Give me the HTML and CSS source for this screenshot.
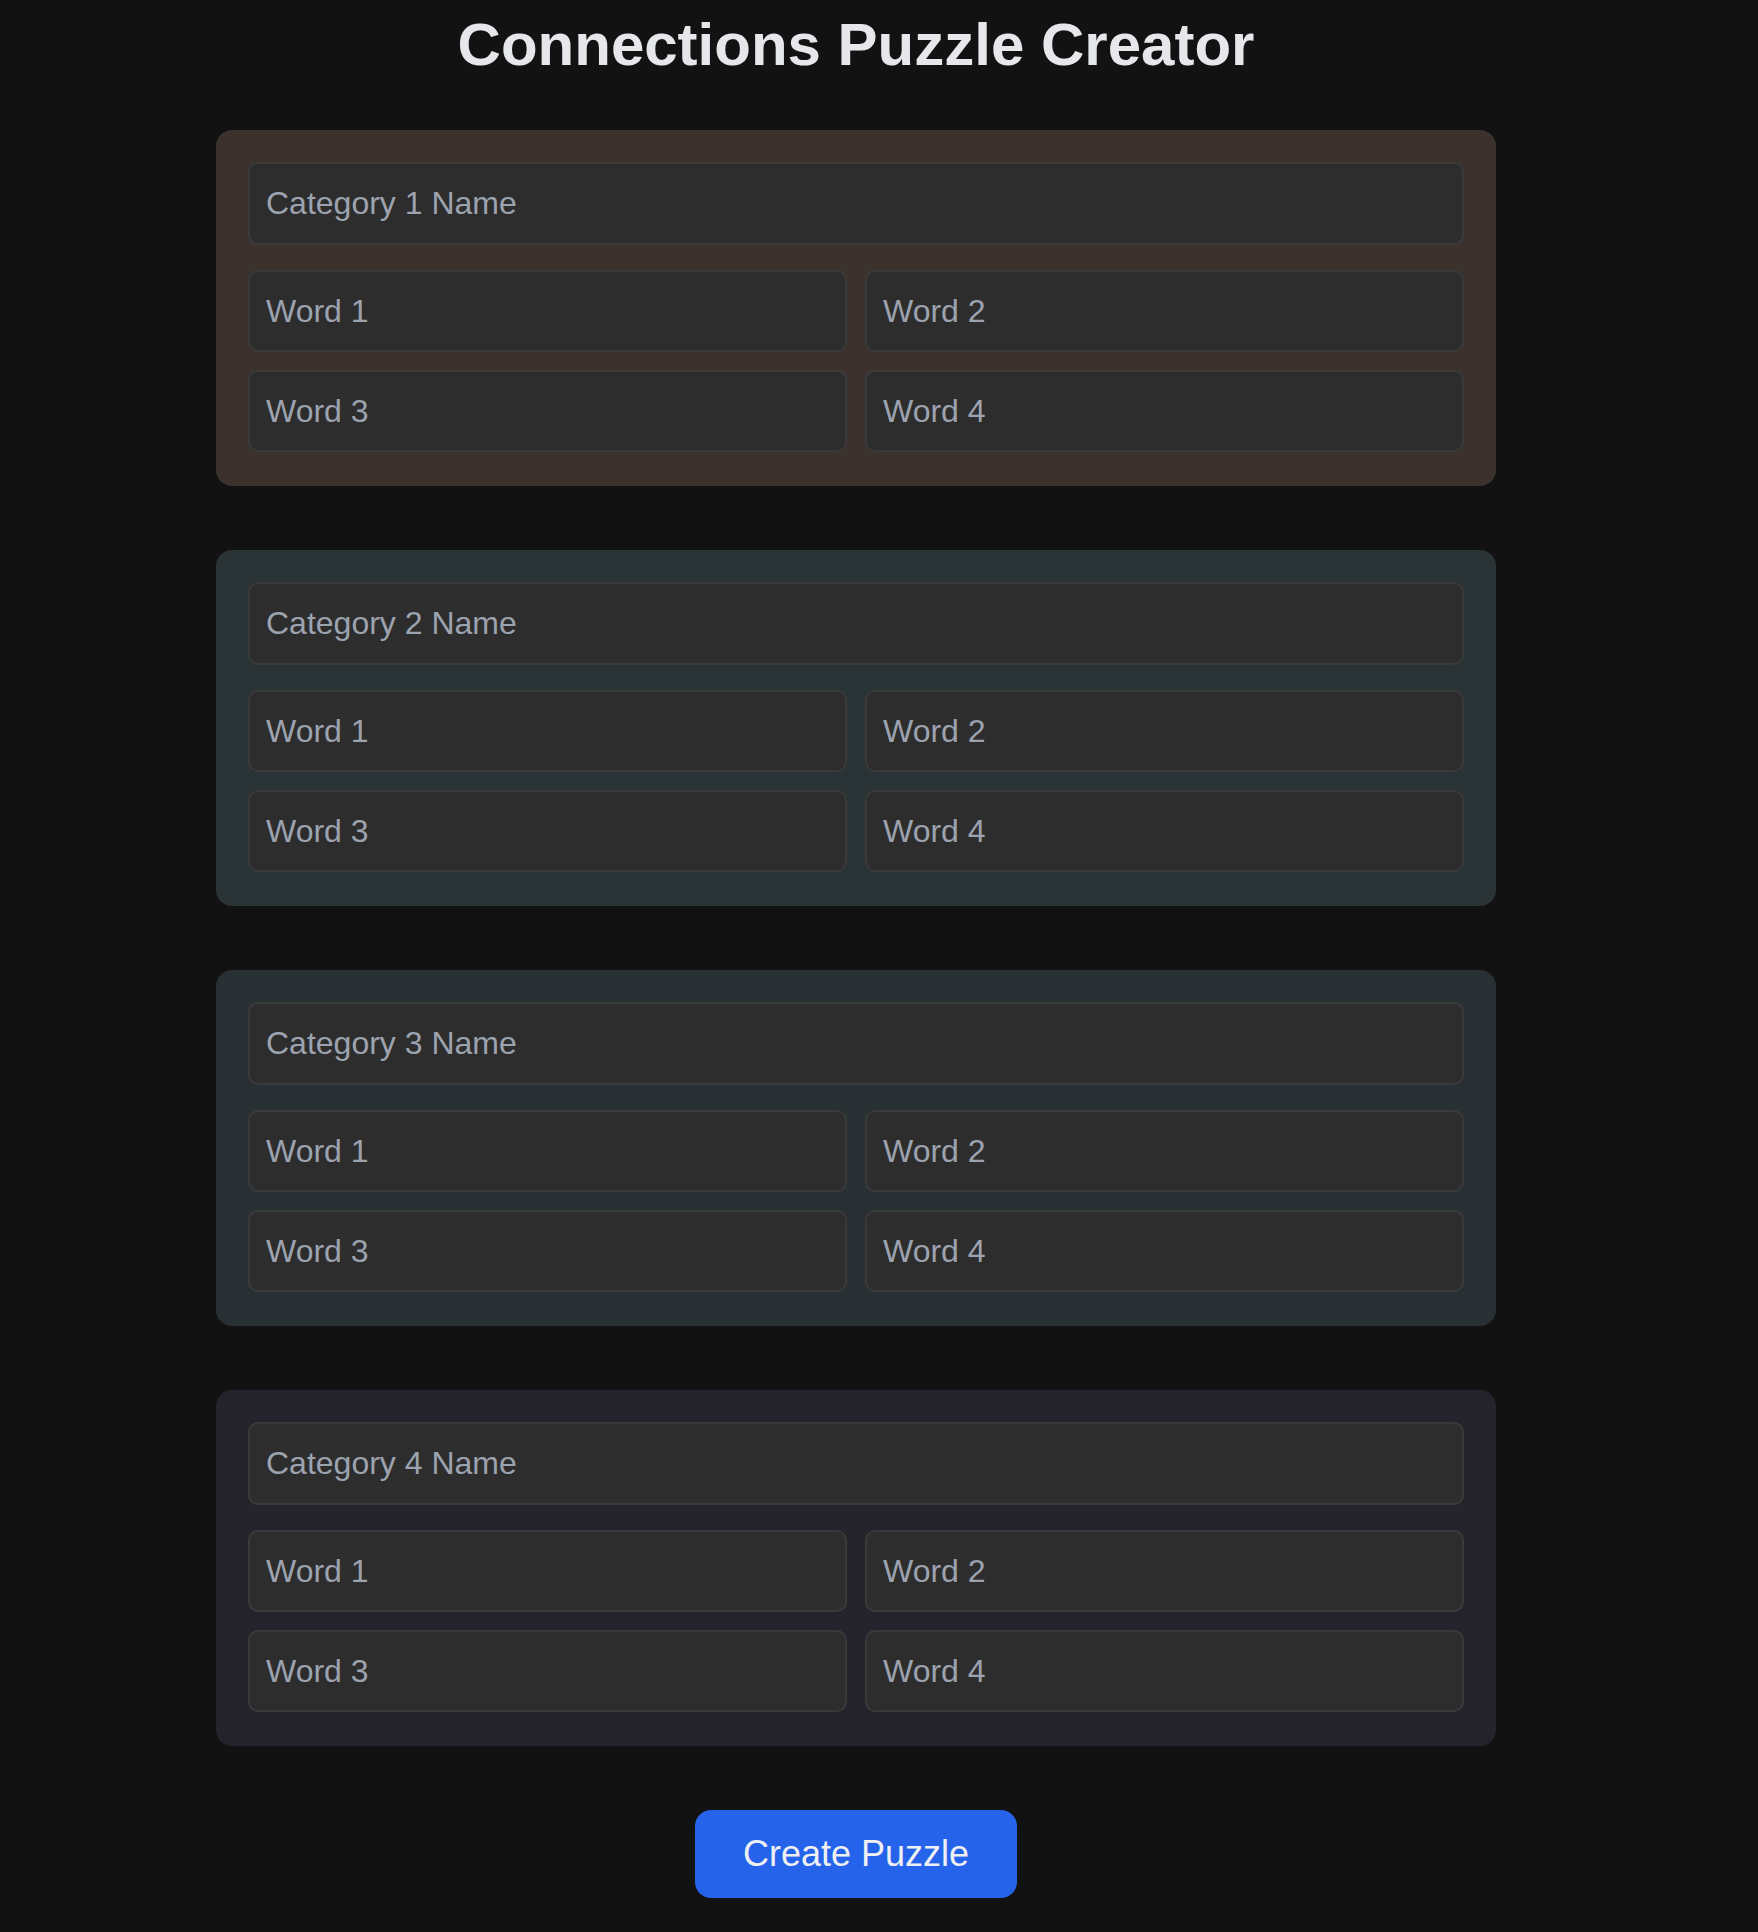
FILE: index.html
```html
<!DOCTYPE html>
<html lang="en">
<head>
<meta charset="utf-8">
<title>Connections Puzzle Creator</title>
<link rel="stylesheet" href="styles.css">
</head>
<body>
<main class="page">
  <h1 class="title">Connections Puzzle Creator</h1>
  <form class="creator">
    <section class="category cat-1">
      <input class="field cat-name" type="text" placeholder="Category 1 Name">
      <div class="words">
        <input class="field" type="text" placeholder="Word 1">
        <input class="field" type="text" placeholder="Word 2">
        <input class="field" type="text" placeholder="Word 3">
        <input class="field" type="text" placeholder="Word 4">
      </div>
    </section>
    <section class="category cat-2">
      <input class="field cat-name" type="text" placeholder="Category 2 Name">
      <div class="words">
        <input class="field" type="text" placeholder="Word 1">
        <input class="field" type="text" placeholder="Word 2">
        <input class="field" type="text" placeholder="Word 3">
        <input class="field" type="text" placeholder="Word 4">
      </div>
    </section>
    <section class="category cat-3">
      <input class="field cat-name" type="text" placeholder="Category 3 Name">
      <div class="words">
        <input class="field" type="text" placeholder="Word 1">
        <input class="field" type="text" placeholder="Word 2">
        <input class="field" type="text" placeholder="Word 3">
        <input class="field" type="text" placeholder="Word 4">
      </div>
    </section>
    <section class="category cat-4">
      <input class="field cat-name" type="text" placeholder="Category 4 Name">
      <div class="words">
        <input class="field" type="text" placeholder="Word 1">
        <input class="field" type="text" placeholder="Word 2">
        <input class="field" type="text" placeholder="Word 3">
        <input class="field" type="text" placeholder="Word 4">
      </div>
    </section>
    <div class="actions">
      <button class="create-btn" type="button">Create Puzzle</button>
    </div>
  </form>
</main>
</body>
</html>
```

FILE: styles.css
```css
html, body {
  margin: 0;
  padding: 0;
  background: #121212;
}

body {
  font-family: "Liberation Sans", Arial, sans-serif;
  color: #e5e7eb;
  min-height: 1932px;
}

.page {
  width: 1712px;
  display: flex;
  flex-direction: column;
  align-items: center;
}

.title {
  margin: 10px 0 51px;
  font-size: 60px;
  font-weight: 700;
  line-height: normal;
  color: #e5e7eb;
  text-align: center;
}

.creator {
  width: 1280px;
  display: flex;
  flex-direction: column;
  gap: 64px;
}

.category {
  padding: 32px 32px 34px;
  border-radius: 16px;
  display: flex;
  flex-direction: column;
  gap: 25px;
}

.cat-1 { background: #3c322d; }
.cat-2 { background: #2a3335; }
.cat-3 { background: #283034; }
.cat-4 { background: #25232b; }

.words {
  display: grid;
  grid-template-columns: 1fr 1fr;
  column-gap: 18px;
  row-gap: 18px;
}

.field {
  box-sizing: border-box;
  width: 100%;
  height: 82px;
  margin: 0;
  padding: 0 16px;
  background: #2d2d2d;
  border: 2px solid #3a3a3a;
  border-radius: 10px;
  font-family: "Liberation Sans", Arial, sans-serif;
  font-size: 32px;
  color: #e5e7eb;
  outline: none;
}

.cat-name {
  height: 83px;
}

.field::placeholder {
  color: #9ca3af;
  opacity: 1;
}

.actions {
  display: flex;
  justify-content: center;
}

.create-btn {
  height: 88px;
  padding: 0 48px;
  background: #2563eb;
  border: none;
  border-radius: 16px;
  font-family: "Liberation Sans", Arial, sans-serif;
  font-size: 36px;
  color: #eef0f4;
  cursor: pointer;
}
```
